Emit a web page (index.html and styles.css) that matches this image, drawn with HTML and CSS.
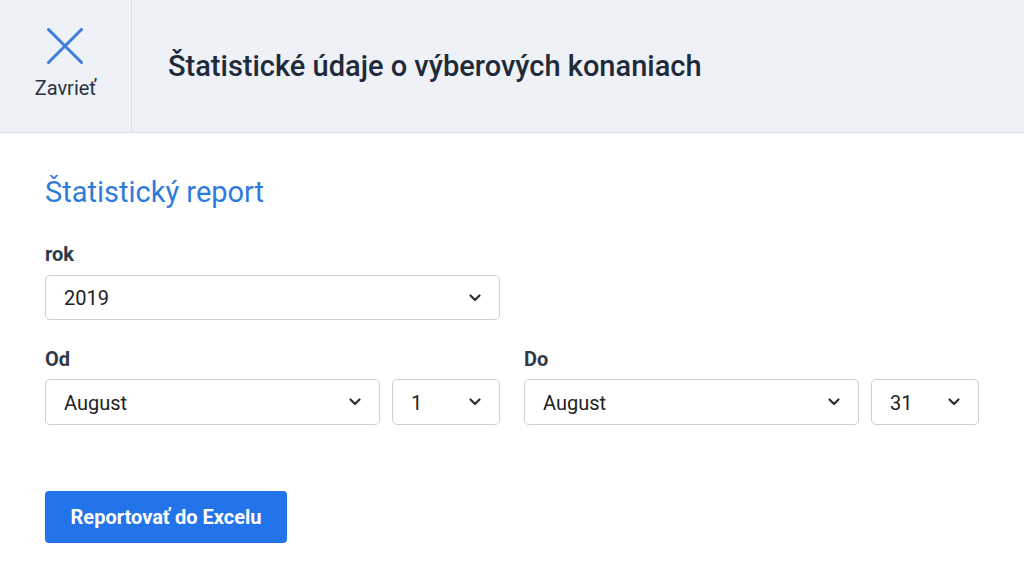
FILE: index.html
```html
<!DOCTYPE html>
<html lang="sk">
<head>
<meta charset="utf-8">
<title>Štatistické údaje o výberových konaniach</title>
<link rel="stylesheet" href="styles.css">
</head>
<body>
<header class="topbar">
  <button class="close">
    <svg class="close-icon" width="36" height="36" viewBox="0 0 36 36"><path d="M1.5 1.5 L34.5 34.5 M34.5 1.5 L1.5 34.5" stroke="#3b7ddd" stroke-width="3" stroke-linecap="round" fill="none"/></svg>
    <span class="close-label">Zavrieť</span>
  </button>
  <h1 class="title">Štatistické údaje o výberových konaniach</h1>
</header>
<main class="content">
  <h2 class="section-title">Štatistický report</h2>
  <div class="field field-year">
    <div class="label">rok</div>
    <div class="select"><span>2019</span><svg class="chev" width="12" height="8" viewBox="0 0 12 8"><path d="M1.5 1.5 L6 6 L10.5 1.5" stroke="#333" stroke-width="2.2" fill="none" stroke-linecap="round" stroke-linejoin="round"/></svg></div>
  </div>
  <div class="range">
    <div class="field">
      <div class="label">Od</div>
      <div class="pair">
        <div class="select"><span>August</span><svg class="chev" width="12" height="8" viewBox="0 0 12 8"><path d="M1.5 1.5 L6 6 L10.5 1.5" stroke="#333" stroke-width="2.2" fill="none" stroke-linecap="round" stroke-linejoin="round"/></svg></div>
        <div class="select"><span>1</span><svg class="chev" width="12" height="8" viewBox="0 0 12 8"><path d="M1.5 1.5 L6 6 L10.5 1.5" stroke="#333" stroke-width="2.2" fill="none" stroke-linecap="round" stroke-linejoin="round"/></svg></div>
      </div>
    </div>
    <div class="field">
      <div class="label">Do</div>
      <div class="pair">
        <div class="select"><span>August</span><svg class="chev" width="12" height="8" viewBox="0 0 12 8"><path d="M1.5 1.5 L6 6 L10.5 1.5" stroke="#333" stroke-width="2.2" fill="none" stroke-linecap="round" stroke-linejoin="round"/></svg></div>
        <div class="select"><span>31</span><svg class="chev" width="12" height="8" viewBox="0 0 12 8"><path d="M1.5 1.5 L6 6 L10.5 1.5" stroke="#333" stroke-width="2.2" fill="none" stroke-linecap="round" stroke-linejoin="round"/></svg></div>
      </div>
    </div>
  </div>
  <button class="btn">Reportovať do Excelu</button>
</main>
</body>
</html>
```
FILE: styles.css
```css
* { box-sizing: border-box; }
html, body { margin: 0; padding: 0; }
body {
  font-family: Roboto, "Noto Sans", sans-serif;
  background: #ffffff;
  color: #222;
  width: 1024px;
  height: 586px;
  overflow: hidden;
}
.topbar {
  display: flex;
  align-items: stretch;
  height: 133px;
  background: #eef1f6;
  border-bottom: 1px solid #d9dee6;
}
.close {
  width: 132px;
  border: 0;
  border-right: 1px solid #d9dee6;
  background: transparent;
  padding: 28px 0 0 0;
  display: flex;
  flex-direction: column;
  align-items: center;
  font-family: inherit;
  cursor: pointer;
}
.close-icon { display: block; margin-left: -1px; }
.close-label {
  margin-top: 12px;
  font-size: 20px;
  line-height: 24px;
  color: #2a3342;
}
.title {
  margin: 0;
  padding: 0 0 0 36px;
  align-self: center;
  font-size: 29px;
  font-weight: 500;
  line-height: 34px;
  color: #1f2a3a;
}
.content {
  padding: 42px 0 0 45px;
}
.section-title {
  margin: 0;
  font-size: 29px;
  font-weight: 400;
  line-height: 34px;
  color: #2f7bdb;
}
.field-year { margin-top: 33px; width: 455px; }
.label {
  font-size: 20px;
  font-weight: 700;
  line-height: 24px;
  color: #2d3a4c;
  margin-bottom: 9px;
}
.select {
  height: 45px;
  border: 1px solid #c9d0da;
  border-radius: 5px;
  background: #fff;
  display: flex;
  align-items: center;
  justify-content: space-between;
  padding: 0 18px 0 18px;
  font-size: 20px;
  color: #222;
}
.select span { padding-top: 1px; }
.range {
  display: grid;
  grid-template-columns: 455px 455px;
  column-gap: 24px;
  margin-top: 27px;
}
.range .label { margin-bottom: 8px; }
.pair {
  display: grid;
  grid-template-columns: 335px 108px;
  column-gap: 12px;
}
.pair .select { height: 46px; }
.btn {
  margin-top: 66px;
  width: 242px;
  height: 52px;
  border: 0;
  border-radius: 4px;
  background: #2374e8;
  color: #fff;
  font-family: inherit;
  font-size: 20px;
  font-weight: 700;
  cursor: pointer;
}
```
